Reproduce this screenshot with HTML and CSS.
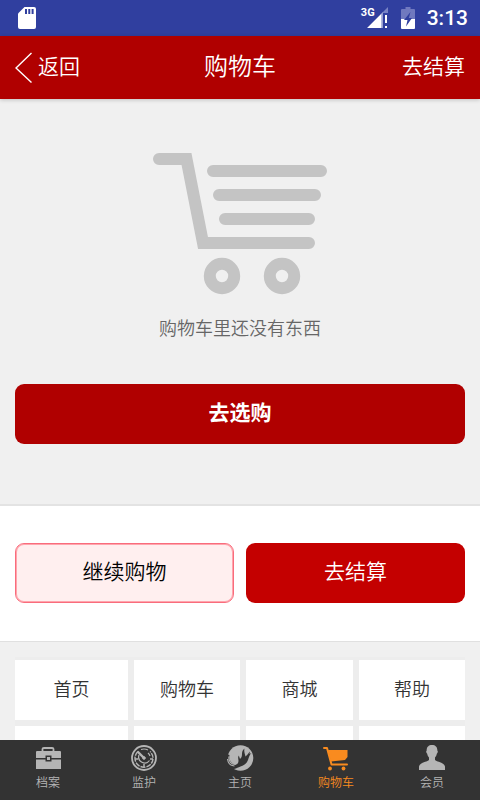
FILE: index.html
```html
<!DOCTYPE html>
<html lang="zh-CN">
<head>
<meta charset="utf-8">
<meta name="viewport" content="width=device-width, initial-scale=1">
<title>购物车</title>
<link rel="stylesheet" href="styles.css">
</head>
<body>
<div class="app">
  <div class="status">
    <svg class="sd" width="18" height="22" viewBox="0 0 18 22" aria-hidden="true">
      <path fill="#fff" d="M6.5 0H16a2 2 0 0 1 2 2V20a2 2 0 0 1-2 2H2a2 2 0 0 1-2-2V6.5z"/>
      <path fill="#303f9f" d="M7 2h2v5H7zM10.300 2h2v5h-2zM13.600 2h2v5h-2z"/>
    </svg>
    <div class="status-right">
      <span class="net">3G</span>
      <svg class="signal" width="22" height="22" viewBox="0 0 22 22" aria-hidden="true">
        <path fill="#7983c5" d="M22 0v6h-6z"/>
        <path fill="#98a0d2" d="M15.500 6.500L17 5v16h-1.500z"/>
        <path fill="#fff" d="M15.500 6.500V21H1zM19 8h2v8h-2zM19 19h2v2h-2z"/>
      </svg>
      <svg class="battery" width="14" height="22" viewBox="0 0 14 22" aria-hidden="true">
        <path fill="#7079bf" d="M4.500 0h5v2H13a1 1 0 0 1 1 1v9H0V3a1 1 0 0 1 1-1h3.500z"/>
        <path fill="#fff" d="M0 12h14v9a1 1 0 0 1-1 1H1a1 1 0 0 1-1-1z"/>
        <path fill="#303f9f" d="M9.500 5L3 13h3.500L5 19.500l6-8.500H7.800z"/>
      </svg>
      <span class="clock">3:13</span>
    </div>
  </div>

  <header class="header">
    <a class="back" href="#">
      <svg width="18" height="32" viewBox="0 0 18 32" fill="none" stroke="#fff" stroke-width="1.400" aria-hidden="true"><path d="M16.500 2L1 17l15.500 14.500"/></svg>
      返回
    </a>
    <h1>购物车</h1>
    <a class="checkout" href="#">去结算</a>
  </header>

  <main class="content">
    <section class="empty">
      <svg class="cart" width="176" height="144" viewBox="0 0 176 144" aria-hidden="true">
        <g fill="none" stroke="#c4c4c4" stroke-width="12">
          <g stroke-linecap="round"><path d="M61 19H169M67 43H163M73 67H157M7 7h20M60 91h97"/></g>
          <path d="M20 7H34.500L51 91H66"/>
          <circle cx="70" cy="124" r="12.200"/><circle cx="130" cy="124" r="12.200"/>
        </g>
      </svg>
      <p>购物车里还没有东西</p>
      <button class="btn shop" type="button">去选购</button>
    </section>
    <section class="actions">
      <button class="btn continue" type="button">继续购物</button>
      <button class="btn pay" type="button">去结算</button>
    </section>
    <nav class="links">
      <div class="grid">
        <a href="#">首页</a><a href="#">购物车</a><a href="#">商城</a><a href="#">帮助</a>
        <a href="#"></a><a href="#"></a><a href="#"></a><a href="#"></a>
      </div>
    </nav>
  </main>

  <nav class="tabs">
    <a href="#">
      <svg width="28" height="28" viewBox="0 0 28 28" aria-hidden="true">
        <path d="M8.500 7V5Q8.500 4 10 4h8q1.500 0 1.500 1V7" fill="none" stroke="#b5b5b5" stroke-width="1.800"/>
        <path fill="#b5b5b5" d="M3 7h23a1 1 0 0 1 1 1v6H17.500v-2.500h-6V14H2V8a1 1 0 0 1 1-1zM2 15.500h9.500v2h6v-2H27V25H2zM13 13h3v3h-3z"/>
      </svg>
      <span>档案</span>
    </a>
    <a href="#">
      <svg width="28" height="28" viewBox="0 0 28 28" fill="none" stroke="#b5b5b5" aria-hidden="true">
        <circle cx="14" cy="14" r="12" stroke-width="1.800"/>
        <path d="M8 7.500a9 9 0 1 0 12 0" stroke-width="1.400" stroke-dasharray="5 1"/>
        <path d="M9 11a6 6 0 0 0 10.500 5.500M11 5.500a9 9 0 0 1 7 .5M18 9a6 6 0 0 1 2 3" stroke-width="1.200"/>
        <path d="M7.500 7.500L14 14" stroke-width="2.400"/><circle cx="14" cy="14" r="1.300" fill="#b5b5b5"/>
        <path d="M5 15h3M20 15h3M14 20v3" stroke-width="1.500"/>
      </svg>
      <span>监护</span>
    </a>
    <a href="#">
      <svg width="28" height="28" viewBox="0 0 28 28" aria-hidden="true">
        <circle cx="14.500" cy="14" r="12.800" fill="#b5b5b5"/>
        <path fill="#333" d="M0 10l3.500 1C2.500 16 5 20 10 20.500c2-.5 2.500-2 2.500-4 0-1.500-1-3 .3-5L14 15c1.500-1 2-3 2-5 0-2 .5-4 2.500-5.500-.7 3 .3 5 1 8 1.500-1 2.500-3 4.500-5l-.5 2.500 2-1c-2.200 2.200-2.500 4-3.500 7-1.200 3.500-4 5.500-7.500 6.500-2.500.8-3.500 2-6.500 2.500L0 26z"/>
        <path fill="none" stroke="#b5b5b5" stroke-width="1.100" d="M2.800 12.500c0 5.500 3.200 8 7 8M1.500 15c.5 4.500 3.500 6.700 7 7"/>
      </svg>
      <span>主页</span>
    </a>
    <a class="active" href="#">
      <svg width="28" height="28" viewBox="0 0 28 28" aria-hidden="true">
        <path d="M2 4h3L9.500 20.500H25" fill="none" stroke="#f98b1f" stroke-width="2" stroke-linejoin="round" stroke-linecap="round"/>
        <path fill="#f98b1f" d="M6 6H25.500v7L23 16 9 17.500z"/>
        <circle cx="8" cy="24.500" r="1.900" fill="#f98b1f"/><circle cx="21.500" cy="24.500" r="1.900" fill="#f98b1f"/>
      </svg>
      <span>购物车</span>
    </a>
    <a href="#">
      <svg width="28" height="28" viewBox="0 0 28 28" aria-hidden="true">
        <path fill="#b5b5b5" d="M14 1c3.500 0 5.500 2.200 5.300 5.500.9.500.5 2.500-.5 3.200-.3 1.800-1 2.800-1.800 3.800v2.500c2 2 9.500 2.500 10 6.500V26H1v-3.500C1.500 18.500 9 18 11 16v-2.500c-.8-1-1.500-2-1.800-3.800-1-.7-1.400-2.700-.5-3.200C8.500 3.200 10.500 1 14 1z"/>
      </svg>
      <span>会员</span>
    </a>
  </nav>
</div>
</body>
</html>
```
FILE: styles.css
```css
* { box-sizing: border-box; }

body {
  margin: 0;
  font-family: Roboto, "Noto Sans CJK SC", sans-serif;
  font-weight: 350;
  color: #333;
  background: #f0f0f0;
}

a { color: inherit; text-decoration: none; }
svg { display: block; flex: none; }

.app {
  display: flex;
  flex-direction: column;
  height: 100vh;
}

.status {
  display: flex;
  flex: none;
  align-items: center;
  justify-content: space-between;
  height: 36px;
  padding: 0 12px 0 18px;
  background: #303f9f;
  color: #fff;
}

.status-right { display: flex; align-items: center; }

.net {
  align-self: flex-start;
  font-size: 11px;
  line-height: 14px;
  font-weight: 700;
}

.signal { margin-left: -9px; }
.battery { margin: 0 12px 0 13px; }

.clock {
  font-size: 21px;
  line-height: 24px;
  font-weight: 500;
}

.header {
  display: grid;
  grid-template-columns: 1fr auto 1fr;
  flex: none;
  align-items: center;
  height: 63px;
  padding: 0 15px 2px;
  position: relative;
  background: #b00000;
  color: #fff;
  font-size: 21px;
  line-height: 32px;
  box-shadow: 0 1px 4px rgba(0, 0, 0, 0.2);
}

.header h1 {
  margin: 0;
  font-size: 24px;
  font-weight: inherit;
}

.back { display: flex; align-items: center; gap: 5px; }
.checkout { text-align: right; }

.content { flex: 1; min-height: 0; overflow: hidden; }

.empty {
  padding: 53px 15px 60px;
  border-bottom: 2px solid #e3e3e3;
}

.cart { margin: 0 auto; }

.empty p {
  margin: 21px 0 43px;
  font-size: 18px;
  line-height: 24px;
  text-align: center;
  color: #666;
}

.btn {
  display: block;
  width: 100%;
  height: 60px;
  padding: 0 0 2px;
  border: 0;
  border-radius: 9px;
  font-family: inherit;
  font-size: 21px;
  font-weight: inherit;
  line-height: 32px;
  color: #fff;
}

.shop { background: #b00000; font-weight: 700; }

.actions {
  display: grid;
  grid-template-columns: 1fr 1fr;
  gap: 12px;
  padding: 37px 15px 38px;
  border-bottom: 1px solid #e0e0e0;
  background: #fff;
}

.continue {
  border: 1px solid #f96c7c;
  background: #ffefef;
  color: #000;
  box-shadow: inset 0 0 0 1px #ffa5ad;
}

.pay { background: #c40000; }

.links { padding: 15px; }

.grid {
  display: grid;
  grid-template-columns: 113fr 106fr 107fr 106fr;
  gap: 6px;
  padding: 3px 0;
  background: #ededed;
}

.grid a {
  height: 60px;
  background: #fff;
  font-size: 18px;
  line-height: 60px;
  text-align: center;
}

.tabs {
  display: grid;
  grid-template-columns: repeat(5, 1fr);
  flex: none;
  height: 60px;
  padding-top: 4px;
  background: #333;
  color: #b5b5b5;
}

.tabs a {
  display: flex;
  flex-direction: column;
  align-items: center;
  font-size: 12px;
  line-height: 22px;
}

.tabs .active { color: #f98b1f; }
```
